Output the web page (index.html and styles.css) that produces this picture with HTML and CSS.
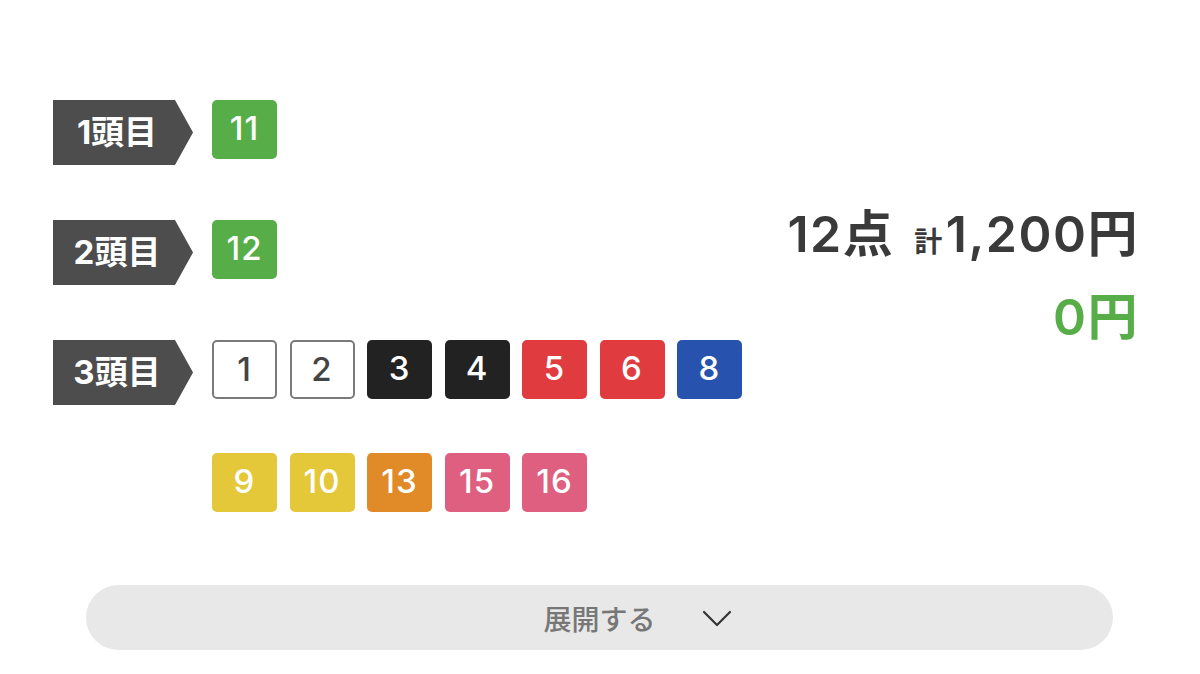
FILE: index.html
```html
<!DOCTYPE html>
<html lang="ja">
<head>
    <meta charset="UTF-8">
    <meta name="viewport" content="width=device-width, initial-scale=1.0">
    <title>三連単 フォーメーション</title>
    <link rel="stylesheet" href="styles.css">
</head>
<body>
    <main class="bet">
        <div class="bet-body">
            <div class="picks">
                <div class="pick-row">
                    <div class="pick-label">1頭目</div>
                    <div class="horses">
                        <span class="horse c-green">11</span>
                    </div>
                </div>
                <div class="pick-row">
                    <div class="pick-label">2頭目</div>
                    <div class="horses">
                        <span class="horse c-green">12</span>
                    </div>
                </div>
                <div class="pick-row">
                    <div class="pick-label">3頭目</div>
                    <div class="horses">
                        <span class="horse c-white">1</span>
                        <span class="horse c-white">2</span>
                        <span class="horse c-black">3</span>
                        <span class="horse c-black">4</span>
                        <span class="horse c-red">5</span>
                        <span class="horse c-red">6</span>
                        <span class="horse c-blue">8</span>
                        <span class="horse c-yellow">9</span>
                        <span class="horse c-yellow">10</span>
                        <span class="horse c-orange">13</span>
                        <span class="horse c-pink">15</span>
                        <span class="horse c-pink">16</span>
                    </div>
                </div>
            </div>

            <div class="summary">
                <div class="summary-total">12点<span class="summary-sum"><small>計</small>1,200円</span></div>
                <div class="summary-payout">0円</div>
            </div>
        </div>

        <button class="expand-btn" type="button">
            <span class="expand-text">展開する
                <svg class="chevron" width="30" height="17" viewBox="0 0 30 17" fill="none">
                    <path d="M2 2 L15 15 L28 2" stroke="#333" stroke-width="2.2" stroke-linecap="round" stroke-linejoin="round"/>
                </svg>
            </span>
        </button>
    </main>
</body>
</html>
```

FILE: styles.css
```css
body {
    margin: 0;
    background-color: #fff;
    font-family: Inter, "Noto Sans CJK JP", sans-serif;
    color: #3a3a3a;
}

.bet {
    padding: 100px 0 0 0;
}

.bet-body {
    display: flex;
    justify-content: space-between;
    padding: 0 61px 0 53px;
}

.picks {
    display: flex;
    flex-direction: column;
    gap: 55px;
}

.pick-row {
    display: flex;
    align-items: flex-start;
    gap: 19px;
}

.pick-label {
    width: 140px;
    height: 65px;
    flex-shrink: 0;
    box-sizing: border-box;
    padding-right: 12px;
    background-color: #4d4d4d;
    clip-path: polygon(0 0, 122px 0, 140px 50%, 122px 100%, 0 100%);
    color: #fff;
    font-size: 33px;
    font-weight: 700;
    line-height: 65px;
    text-align: center;
}

.horses {
    display: flex;
    flex-wrap: wrap;
    width: 545px;
    column-gap: 12.5px;
    row-gap: 54px;
}

.horse {
    width: 65px;
    height: 59px;
    box-sizing: border-box;
    border-radius: 5px;
    color: #fff;
    font-size: 33px;
    font-weight: 500;
    line-height: 56px;
    text-align: center;
    letter-spacing: 1px;
}

.c-green { background-color: #57ad47; }
.c-black { background-color: #222; }
.c-red { background-color: #e03b3f; }
.c-blue { background-color: #2752ad; }
.c-yellow { background-color: #e4c83a; }
.c-orange { background-color: #e08a28; }
.c-pink { background-color: #de5f7f; }

.c-white {
    background-color: #fff;
    border: 2px solid #7a7a7a;
    color: #444;
    line-height: 54px;
}

.summary {
    padding-top: 104px;
    text-align: right;
}

.summary-total {
    font-size: 50px;
    font-weight: 600;
    line-height: 60px;
    letter-spacing: 1.5px;
    color: #3a3a3a;
}

.summary-sum {
    margin-left: 20px;
}

.summary-sum small {
    font-size: 28px;
    margin-right: 2px;
}

.summary-payout {
    margin-top: 15px;
    font-size: 50px;
    font-weight: 600;
    line-height: 60px;
    letter-spacing: 1.5px;
    color: #57ad47;
}

.expand-btn {
    display: flex;
    align-items: center;
    justify-content: center;
    width: 1027px;
    height: 65px;
    margin: 73px 0 0 86px;
    border: none;
    border-radius: 33px;
    background-color: #e8e8e8;
    font-family: "Noto Sans CJK JP", sans-serif;
    font-size: 28px;
    font-weight: 500;
    color: #777;
    cursor: pointer;
}

.expand-text {
    position: relative;
}

/* the arrow hangs to the right so the label itself stays centred */
.chevron {
    position: absolute;
    left: calc(100% + 46px);
    top: 50%;
    margin-top: -8px;
}
```
